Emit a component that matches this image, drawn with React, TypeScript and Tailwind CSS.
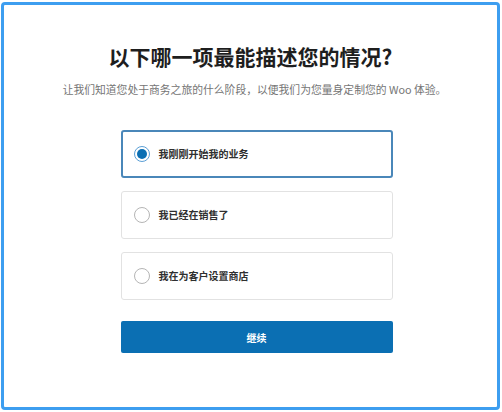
import React from "react";

const font = { fontFamily: '"Noto Sans CJK SC", "Noto Sans", sans-serif' };

function Option({ label, selected }: { label: string; selected?: boolean }) {
  return (
    <div
      className={
        selected
          ? "flex items-center h-[48px] w-[272px] rounded-[3px] border-2 border-[#4a87b9] bg-white pl-[11px]"
          : "flex items-center h-[48px] w-[272px] rounded-[3px] border border-[#e2e2e2] bg-white pl-[12px]"
      }
    >
      {selected ? (
        <span className="flex items-center justify-center w-[16px] h-[16px] rounded-full border border-[#5b9fd6] bg-white">
          <span className="w-[10px] h-[10px] rounded-full bg-[#0b6fb3]" />
        </span>
      ) : (
        <span className="w-[16px] h-[16px] rounded-full border border-[#b5b5b5] bg-white" />
      )}
      <span className="ml-[9px] text-[10px] leading-[14px] font-bold text-[#2f2f2f]">{label}</span>
    </div>
  );
}

export default function App() {
  return (
    <div className="w-[502px] h-[412px] bg-white pt-[2px] pl-[1px]" style={font}>
      <div className="w-[499px] h-[408px] rounded-[4px] border-[3px] border-[#3d9ef0] bg-white flex flex-col items-center pt-[37px]">
        <h1 className="text-[21px] leading-[28px] font-bold text-[#1e1e1e]">以下哪一项最能描述您的情况?</h1>
        <p className="mt-[11px] ml-[8px] text-[10.8px] leading-[16px] text-[#757575]">
          让我们知道您处于商务之旅的什么阶段，以便我们为您量身定制您的 Woo 体验。
        </p>
        <div className="mt-[33px] ml-[12px] flex flex-col gap-[13px]">
          <Option label="我刚刚开始我的业务" selected />
          <Option label="我已经在销售了" />
          <Option label="我在为客户设置商店" />
          <button className="mt-[8px] h-[32px] w-[272px] rounded-[2px] bg-[#0b6fb3] text-white text-[10px] font-bold">
            继续
          </button>
        </div>
      </div>
    </div>
  );
}
